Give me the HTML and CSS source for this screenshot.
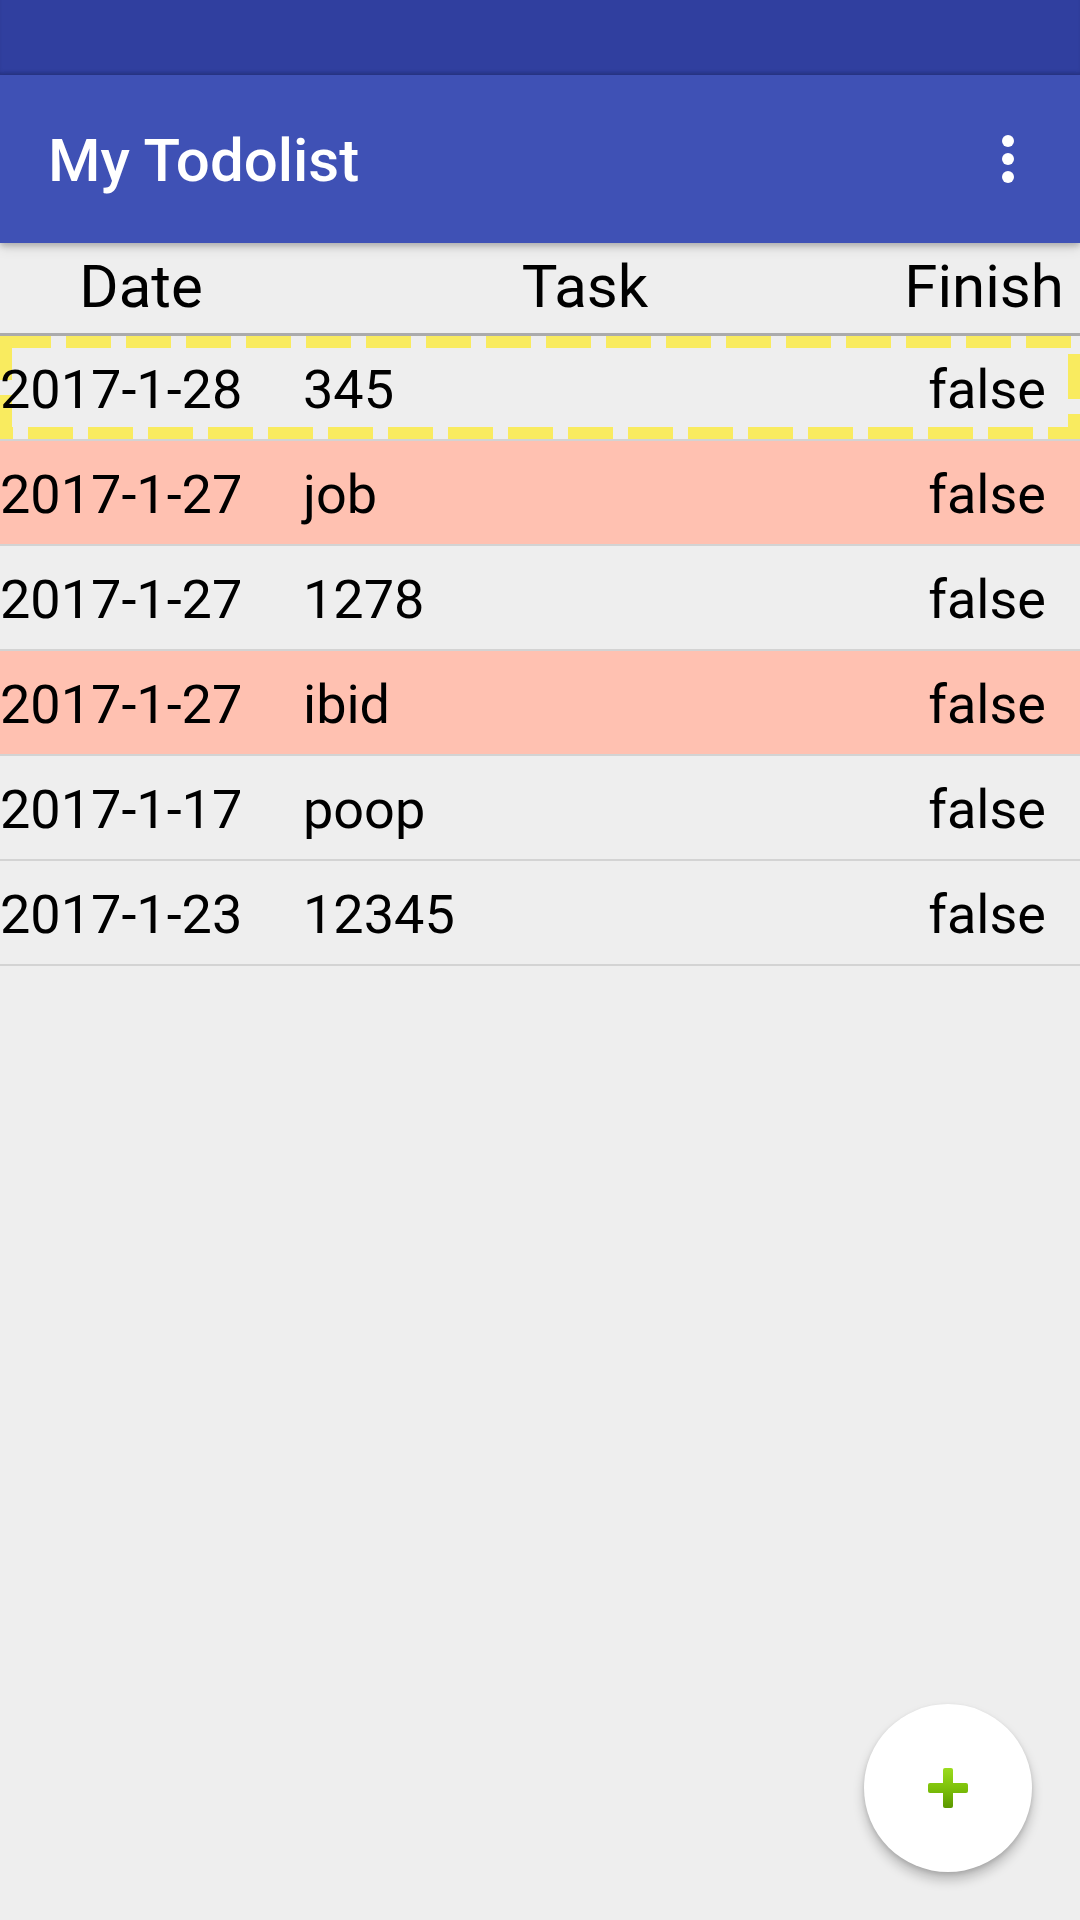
FILE: index.html
```html
<!DOCTYPE html>
<html lang="en">
<head>
<meta charset="utf-8">
<title>My Todolist</title>
<link rel="stylesheet" href="styles.css">
</head>
<body>
<div class="screen">
  <div class="statusbar"></div>
  <header class="appbar">
    <h1 class="title">My Todolist</h1>
    <button class="overflow" aria-label="More options">
      <svg width="12" height="48" viewBox="0 0 12 48"><circle cx="6" cy="6" r="6" fill="#fff"/><circle cx="6" cy="24" r="6" fill="#fff"/><circle cx="6" cy="42" r="6" fill="#fff"/></svg>
    </button>
  </header>
  <div class="table-head">
    <span>Date</span>
    <span>Task</span>
    <span>Finish</span>
  </div>
  <ul class="rows">
    <li class="row focused">
      <svg class="focus-ring" width="1080" height="103" viewBox="0 0 1080 103"><rect x="6" y="6" width="1068" height="91" fill="none" stroke="#F9EB5F" stroke-width="12" stroke-dasharray="45 15"/></svg>
      <span class="date">2017-1-28</span><span class="task">345</span><span class="done">false</span>
    </li>
    <li class="row late">
      <span class="date">2017-1-27</span><span class="task">job</span><span class="done">false</span>
    </li>
    <li class="row">
      <span class="date">2017-1-27</span><span class="task">1278</span><span class="done">false</span>
    </li>
    <li class="row late">
      <span class="date">2017-1-27</span><span class="task">ibid</span><span class="done">false</span>
    </li>
    <li class="row">
      <span class="date">2017-1-17</span><span class="task">poop</span><span class="done">false</span>
    </li>
    <li class="row">
      <span class="date">2017-1-23</span><span class="task">12345</span><span class="done">false</span>
    </li>
  </ul>
  <button class="fab" aria-label="Add">
    <svg width="40" height="40" viewBox="0 0 40 40">
      <defs>
        <linearGradient id="g" x1="0" y1="0" x2="0" y2="40" gradientUnits="userSpaceOnUse">
          <stop offset="0" stop-color="#9BDB1E"/>
          <stop offset="0.5" stop-color="#7DC10A"/>
          <stop offset="1" stop-color="#5C9800"/>
        </linearGradient>
      </defs>
      <rect x="15" y="0" width="10" height="40" rx="2" fill="url(#g)"/>
      <rect x="0" y="15" width="40" height="10" rx="2" fill="url(#g)"/>
    </svg>
  </button>
</div>
</body>
</html>
```
FILE: styles.css
```css
* { box-sizing: border-box; }
html, body { margin: 0; padding: 0; }
body {
  background: #EEEEEE;
  font-family: Roboto, "Noto Sans", "Liberation Sans", sans-serif;
  color: #000;
}
.screen {
  position: relative;
  width: 1080px;
  height: 1920px;
  overflow: hidden;
  background: #EEEEEE;
}
.statusbar {
  height: 75px;
  background: #303F9F;
  box-shadow: inset 0 -4px 4px -2px rgba(0,0,0,0.18);
}
.appbar {
  position: relative;
  z-index: 2;
  height: 168px;
  background: #3F51B5;
  display: flex;
  align-items: center;
  justify-content: space-between;
  padding-left: 48px;
  box-shadow: 0 3px 6px rgba(0,0,0,0.22), 0 6px 12px rgba(0,0,0,0.08);
}
.title {
  margin: 0;
  margin-top: 4px;
  font-size: 60px;
  font-weight: 500;
  line-height: 1;
  color: #fff;
}
.overflow {
  background: none;
  border: 0;
  padding: 0;
  margin-right: 66px;
  display: flex;
  align-items: center;
}
.table-head {
  height: 93px;
  border-bottom: 3px solid #ABABAB;
  display: grid;
  grid-template-columns: 282px 606px 1fr;
  justify-items: center;
  align-items: center;
  padding-bottom: 3px;
  font-size: 60px;
  line-height: 1;
}
.rows {
  list-style: none;
  margin: 0;
  padding: 0;
}
.row {
  position: relative;
  height: 105px;
  border-bottom: 2px solid #D3D3D3;
  display: grid;
  grid-template-columns: 303px 1fr auto;
  align-items: center;
  padding-right: 34px;
  padding-top: 5px;
  font-size: 54px;
  line-height: 1;
}
.row > span {
  position: relative;
}
.row.late { background: #FFC1B1; }
.focus-ring {
  position: absolute;
  left: 0;
  top: 0;
  pointer-events: none;
}
.fab {
  position: absolute;
  right: 48px;
  bottom: 48px;
  width: 168px;
  height: 168px;
  border-radius: 50%;
  border: 0;
  padding: 0;
  background: #fff;
  display: flex;
  align-items: center;
  justify-content: center;
  box-shadow: 0 8px 12px rgba(0,0,0,0.22), 0 2px 4px rgba(0,0,0,0.12);
}
```
